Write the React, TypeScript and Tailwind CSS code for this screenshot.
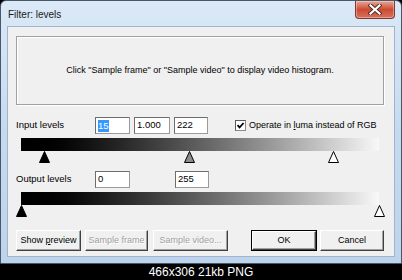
import React from "react";

const F = { fontFamily: '"Liberation Sans", Arial, sans-serif' };

function Tri({ kind }: { kind: "black" | "gray" | "white" }) {
  const fill = kind === "black" ? "#000" : kind === "gray" ? "#8c8c8c" : "#fff";
  return (
    <svg width="11" height="12" viewBox="0 0 11 12">
      <polygon points="5.5,0.5 10.5,11.5 0.5,11.5" fill={fill} stroke="#000" strokeWidth="1" />
    </svg>
  );
}

function Field({ w, children }: { w: string; children: React.ReactNode }) {
  return (
    <div
      className={`${w} h-[17px] bg-white border border-[#9a9a9a] border-t-[#6d6d6d] border-l-[#6d6d6d] flex items-center pl-[2px] text-[9.5px] text-black`}
    >
      {children}
    </div>
  );
}

function Btn({
  w,
  ml,
  children,
  disabled,
  def,
}: {
  w: string;
  ml: string;
  children: React.ReactNode;
  disabled?: boolean;
  def?: boolean;
}) {
  return (
    <div
      className={`${w} ${ml} h-[21px] flex items-center justify-center bg-[#f0f0f0] text-[9px] whitespace-nowrap ${
        def ? "border border-black" : ""
      }`}
    >
      <div className="w-full h-full border border-white border-r-[#404040] border-b-[#404040] flex items-center justify-center shadow-[inset_-1px_-1px_0_#a0a0a0]">
        <span
          className={disabled ? "text-[#a0a0a0] [text-shadow:1px_1px_0_#fff]" : "text-black"}
        >
          {children}
        </span>
      </div>
    </div>
  );
}

export default function App() {
  return (
    <div className="w-[402px] h-[280px] bg-black relative overflow-hidden" style={F}>
      <div className="w-[402px] h-[264px] rounded-t-[6px] border border-[#48586a] bg-gradient-to-b from-[#dbe9f7] via-[#c6daef] to-[#bed4ec] flex flex-col">
        {/* title bar */}
        <div className="h-[25px] flex items-start relative">
          <div className="pl-[7px] pt-[6px] text-[10px] text-[#1a1a1a]">Filter: levels</div>
          <div className="ml-auto mr-[6px] w-[40px] h-[18px] rounded-b-[4px] border border-[#7a3a30] border-t-0 bg-gradient-to-b from-[#e7a595] via-[#cc4a32] to-[#d8705a] flex items-center justify-center shadow-[inset_0_0_0_1px_rgba(255,255,255,0.35)]">
            <svg width="14" height="11" viewBox="0 0 14 11">
              <path d="M2.5 1.5 L11.5 9.5 M11.5 1.5 L2.5 9.5" stroke="#4a2a24" strokeWidth="4" strokeLinecap="square" />
              <path d="M2.5 1.5 L11.5 9.5 M11.5 1.5 L2.5 9.5" stroke="#ffffff" strokeWidth="2.2" strokeLinecap="square" />
            </svg>
          </div>
        </div>
        {/* client */}
        <div className="mx-[6px] h-[231px] bg-[#f0f0f0] border border-[#9fb5cf] pl-[8px] pt-[9px] flex flex-col">
          <div className="w-[368px] h-[69px] border border-[#a0a0a0] shadow-[inset_1px_1px_0_#fff,1px_1px_0_#fff] flex items-center justify-center text-[9px] text-black">
            Click "Sample frame" or "Sample video" to display video histogram.
          </div>
          {/* input row */}
          <div className="mt-[12px] h-[17px] flex items-center text-[9.5px] text-black">
            <div className="w-[79px]">Input levels</div>
            <Field w="w-[35px]">
              <span className="bg-[#3399ff] text-white leading-[12px]">15</span>
            </Field>
            <div className="w-[4px]" />
            <Field w="w-[36px]">1.000</Field>
            <div className="w-[4px]" />
            <Field w="w-[34px]">222</Field>
            <div className="ml-[27px] w-[11px] h-[11px] bg-white border border-[#8a8a8a] border-t-[#5a5a5a] border-l-[#5a5a5a] flex items-center justify-center">
              <svg width="9" height="9" viewBox="0 0 9 9">
                <path d="M1.5 4.2 L3.6 6.4 L7.6 2" stroke="#000" strokeWidth="1.7" fill="none" />
              </svg>
            </div>
            <div className="ml-[3px] text-[9px]">
              Operate in <span className="underline">l</span>uma instead of RGB
            </div>
          </div>
          {/* gradient 1 */}
          <div className="mt-[4px] ml-[5px] w-[358px] h-[13px] bg-gradient-to-r from-black to-[#f8f8f8]" />
          <div className="ml-[5px] w-[358px] h-[12px] relative">
            <div className="absolute left-[18px] top-0">
              <Tri kind="black" />
            </div>
            <div className="absolute left-[163px] top-0">
              <Tri kind="gray" />
            </div>
            <div className="absolute left-[307px] top-0">
              <Tri kind="white" />
            </div>
          </div>
          {/* output row */}
          <div className="mt-[8px] h-[17px] flex items-center text-[9.5px] text-black">
            <div className="w-[79px]">Output levels</div>
            <Field w="w-[35px]">0</Field>
            <div className="w-[45px]" />
            <Field w="w-[34px]">255</Field>
          </div>
          {/* gradient 2 */}
          <div className="mt-[4px] ml-[5px] w-[358px] h-[13px] bg-gradient-to-r from-black to-[#f8f8f8]" />
          <div className="ml-[5px] w-[358px] h-[12px] relative">
            <div className="absolute left-[-5px] top-0">
              <Tri kind="black" />
            </div>
            <div className="absolute left-[353px] top-0">
              <Tri kind="white" />
            </div>
          </div>
          {/* buttons */}
          <div className="mt-[13px] flex">
            <Btn w="w-[65px]" ml="ml-0">
              Show <span className="underline">p</span>review
            </Btn>
            <Btn w="w-[63px]" ml="ml-[4px]" disabled>
              Sample frame
            </Btn>
            <Btn w="w-[75px]" ml="ml-[5px]" disabled>
              Sample video...
            </Btn>
            <Btn w="w-[66px]" ml="ml-[23px]" def>
              OK
            </Btn>
            <Btn w="w-[64px]" ml="ml-[3px]">
              Cancel
            </Btn>
          </div>
        </div>
      </div>
      <div className="h-[16px] flex items-center justify-center text-[12px] text-white">466x306 21kb PNG</div>
    </div>
  );
}
